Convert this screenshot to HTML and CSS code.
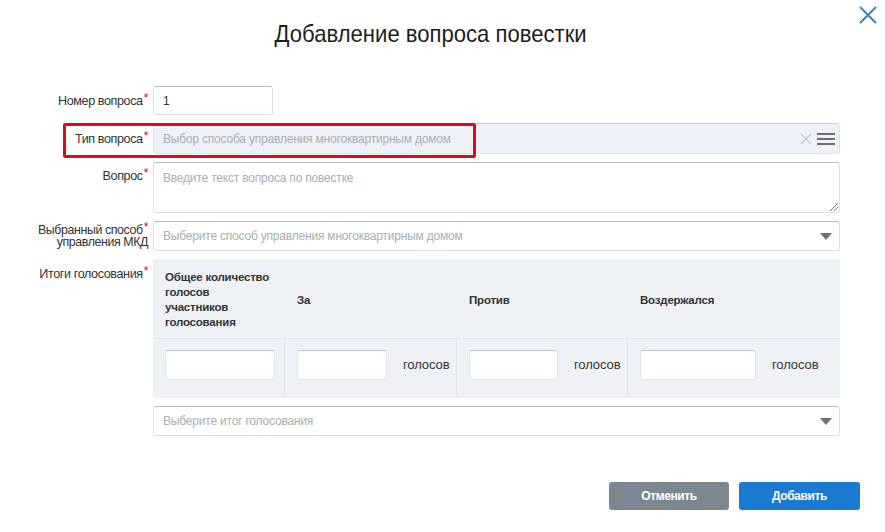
FILE: index.html
```html
<!DOCTYPE html>
<html lang="ru">
<head>
<meta charset="utf-8">
<title>Добавление вопроса повестки</title>
<link rel="stylesheet" href="styles.css">
</head>
<body>
<div class="modal">
  <button class="close" aria-label="Закрыть">
    <svg width="20" height="20" viewBox="0 0 20 20"><path d="M2 2 L18 18 M18 2 L2 18" stroke="#3a84b6" stroke-width="2" fill="none"/></svg>
  </button>
  <h1 class="title"><span class="title-text">Добавление вопроса повестки</span></h1>

  <div class="form">
    <div class="row">
      <label class="label">Номер вопроса<span class="req">*</span></label>
      <div class="field"><div class="input short">1</div></div>
    </div>

    <div class="row row-type">
      <div class="highlight"></div>
      <label class="label">Тип вопроса<span class="req">*</span></label>
      <div class="field">
        <div class="input disabled">
          <span class="ph">Выбор способа управления многоквартирным домом</span>
          <span class="icons">
            <svg width="12" height="12" viewBox="0 0 12 12"><path d="M1 1 L11 11 M11 1 L1 11" stroke="#c4c8cc" stroke-width="1.3" fill="none"/></svg>
            <svg width="18" height="14" viewBox="0 0 18 14"><path d="M0 2 H18 M0 7 H18 M0 12 H18" stroke="#6e6e6e" stroke-width="2.2" fill="none"/></svg>
          </span>
        </div>
      </div>
    </div>

    <div class="row row-top">
      <label class="label">Вопрос<span class="req">*</span></label>
      <div class="field">
        <div class="input textarea">
          <span class="ph">Введите текст вопроса по повестке</span>
          <svg class="resize" width="9" height="9" viewBox="0 0 9 9"><path d="M1 9 L9 1 M5 9 L9 5" stroke="#777" stroke-width="1" fill="none"/></svg>
        </div>
      </div>
    </div>

    <div class="row">
      <label class="label two">Выбранный способ<span class="req">*</span><br>управления МКД</label>
      <div class="field">
        <div class="input select">
          <span class="ph">Выберите способ управления многоквартирным домом</span>
          <span class="caret"></span>
        </div>
      </div>
    </div>

    <div class="row row-top">
      <label class="label votes-label">Итоги голосования<span class="req">*</span></label>
      <div class="field">
        <div class="votes">
          <div class="vh c1">Общее количество<br>голосов<br>участников<br>голосования</div>
          <div class="vh c2">За</div>
          <div class="vh c3">Против</div>
          <div class="vh c4">Воздержался</div>
          <div class="vc c1"><div class="input vin w1"></div></div>
          <div class="vc c2"><div class="input vin w2"></div><span class="unit">голосов</span></div>
          <div class="vc c3"><div class="input vin w3"></div><span class="unit">голосов</span></div>
          <div class="vc c4"><div class="input vin w4"></div><span class="unit">голосов</span></div>
        </div>
      </div>
    </div>

    <div class="row">
      <span class="label"></span>
      <div class="field">
        <div class="input select">
          <span class="ph">Выберите итог голосования</span>
          <span class="caret"></span>
        </div>
      </div>
    </div>
  </div>

  <div class="actions">
    <button class="btn cancel">Отменить</button>
    <button class="btn add">Добавить</button>
  </div>
</div>
</body>
</html>
```

FILE: styles.css
```css
* { box-sizing: border-box; }
html, body { margin: 0; padding: 0; background: #fff; }
body {
  width: 885px;
  height: 532px;
  overflow: hidden;
  font-family: "Liberation Sans", Arial, sans-serif;
  color: #333;
}
.modal {
  position: relative;
  width: 885px;
  height: 532px;
  padding-top: 20px;
}
.close {
  position: absolute;
  top: 4px;
  right: 6px;
  width: 22px;
  height: 22px;
  padding: 1px;
  border: 0;
  background: none;
}
.title {
  margin: 0;
  text-align: center;
  font-size: 24px;
  font-weight: normal;
  color: #1e1e1e;
  line-height: 28px;
  padding-right: 24px;
}
.title-text {
  display: inline-block;
  transform: scaleX(0.92);
}
.form {
  display: flex;
  flex-direction: column;
  gap: 8px;
  margin-top: 38px;
  padding-right: 45px;
}
.row {
  display: grid;
  grid-template-columns: 148px 1fr;
  column-gap: 5px;
  align-items: center;
  position: relative;
}
.row-top { align-items: start; }
.label {
  text-align: right;
  font-size: 12.6px;
  color: #333;
  letter-spacing: -0.4px;
  line-height: 12px;
}
.label.two { line-height: 12.5px; font-size: 12.4px; }
.row-top .label { padding-top: 8px; }
.row-top .votes-label { padding-top: 9px; }
.req { color: #d0021b; margin-left: 1px; position: relative; top: -3px; font-size: 12px; }
.input {
  position: relative;
  height: 30px;
  border: 1px solid #dcdfe3;
  border-top-color: #b9bdc2;
  border-radius: 3px;
  background: #fff;
  font-size: 12px;
  padding: 0 9px;
  display: flex;
  align-items: center;
  color: #333;
}
.input.short { width: 120px; height: 29px; }
.input.disabled { background: #eef2f8; border-color: #dfe3e8; border-top-color: #c6cacf; height: 31px; padding-right: 4px; }
.ph { color: #a8aeb4; letter-spacing: -0.2px; }
.icons {
  margin-left: auto;
  display: flex;
  align-items: center;
  gap: 5px;
}
.textarea { height: 51px; align-items: flex-start; padding-top: 8px; }
.resize { position: absolute; right: 1px; bottom: 1px; }
.select { height: 30px; }
.caret {
  margin-left: auto;
  margin-right: -2px;
  width: 0;
  height: 0;
  border-left: 6px solid transparent;
  border-right: 6px solid transparent;
  border-top: 7px solid #707070;
}
.highlight {
  position: absolute;
  left: 63px;
  top: 0;
  width: 413px;
  height: 35px;
  border: 3px solid #d0101e;
  border-radius: 2px;
  pointer-events: none;
  z-index: 2;
}
.votes {
  display: grid;
  grid-template-columns: 132px 172px 171px 1fr;
  grid-template-rows: 80px 59px;
  background: #eef2f6;
  border-radius: 2px;
}
.vh {
  padding-left: 12px;
  display: flex;
  align-items: center;
  font-size: 11.5px;
  font-weight: bold;
  line-height: 15px;
  color: #333;
  letter-spacing: -0.2px;
  border-bottom: 1px solid #e0e5eb;
}
.vh.c1 { padding-top: 2px; }
.vh.c2, .vh.c3, .vh.c4 { padding-top: 3px; }
.vc {
  display: flex;
  align-items: flex-start;
  padding-left: 12px;
  padding-top: 11px;
  border-right: 1px solid #e0e5eb;
}
.vc.c4 { border-right: 0; }
.vin { height: 30px; border-color: #e2e5e8; border-top-color: #c2c6ca; }
.w1 { width: 110px; }
.w2 { width: 90px; }
.w3 { width: 89px; }
.w4 { width: 116px; }
.unit {
  margin-left: 16px;
  font-size: 13px;
  line-height: 30px;
  color: #333;
  letter-spacing: -0.1px;
}
.actions {
  display: flex;
  justify-content: flex-end;
  gap: 10px;
  padding-right: 25px;
  margin-top: 46px;
}
.btn {
  height: 28px;
  width: 120px;
  border: 0;
  border-radius: 3px;
  color: #fff;
  font-family: "Liberation Sans", Arial, sans-serif;
  font-size: 12px;
  font-weight: bold;
  letter-spacing: -0.4px;
}
.cancel { background: #7b8892; }
.add { background: #1b7bd2; width: 121px; }
```
